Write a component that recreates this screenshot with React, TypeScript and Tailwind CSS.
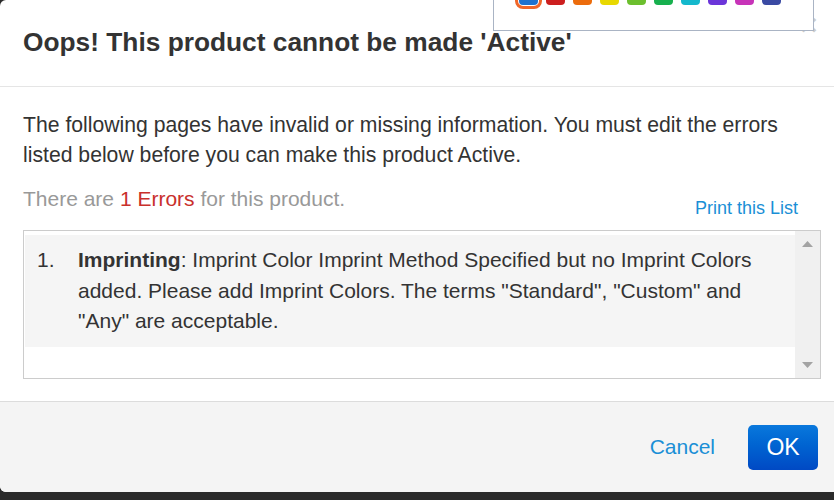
const SWATCHES = ['#cc1f1f', '#ec6c0c', '#e8d800', '#6cbf2e', '#17b04e', '#14b8cc', '#6b35d9', '#c733b8', '#3a4aa3'];

export default function App() {
  return (
    <div
      className="relative h-[500px] w-full overflow-hidden bg-[#2a2a2a] text-[#333]"
      style={{ fontFamily: '"Liberation Sans", Arial, sans-serif' }}
    >
      <div className="flex h-[492px] w-[844px] flex-col overflow-hidden rounded-md bg-white">
        {/* header */}
        <div className="relative h-[87px] shrink-0 border-b border-[#e5e5e5] px-[23px] pt-[26px]">
          <h1 className="text-[26.3px] font-bold leading-[32px]">Oops! This product cannot be made 'Active'</h1>
          <span className="absolute left-[800px] top-[10px] text-[30px] font-bold leading-none text-black opacity-20">×</span>
        </div>

        {/* body */}
        <div className="flex-1 px-[23px] pt-[23px]">
          <p className="text-[21.2px] leading-[30px]">
            The following pages have invalid or missing information. You must edit the errors listed below before you can make this product Active.
          </p>
          <div className="mt-[14px] flex items-start justify-between">
            <p className="text-[21px] leading-[30px] text-[#999]">
              There are <span className="text-[#c9302c]">1 Errors</span> for this product.
            </p>
            <a className="mr-[23px] mt-[13px] text-[18px] leading-[22px] text-[#1a8fd6]">Print this List</a>
          </div>
          <div className="mt-[11px] flex h-[149px] w-[798px] border border-[#ccc]">
            <div className="flex-1 pl-px pt-[4px]">
              <div className="flex bg-[#f5f5f5] pb-[10px] pl-[12px] pr-[30px] pt-[10px] text-[21px] leading-[30.5px]">
                <span className="w-[41px] shrink-0">1.</span>
                <p>
                  <b>Imprinting</b>: Imprint Color Imprint Method Specified but no Imprint Colors added. Please add Imprint Colors. The terms "Standard", "Custom" and "Any" are acceptable.
                </p>
              </div>
            </div>
            <div className="flex w-[25px] flex-col items-center justify-between bg-[#f0f0f0] py-[10px]">
              <svg width="11" height="6" viewBox="0 0 11 6"><path d="M0 6 L5.5 0 L11 6 Z" fill="#a3a3a3" /></svg>
              <svg width="11" height="6" viewBox="0 0 11 6"><path d="M0 0 L5.5 6 L11 0 Z" fill="#a3a3a3" /></svg>
            </div>
          </div>
        </div>

        {/* footer */}
        <div className="flex h-[91px] shrink-0 items-center justify-end gap-[33px] border-t border-[#dcdcdc] bg-[#f4f4f4] pr-[26px]">
          <a className="text-[21px] text-[#1a8fd6]">Cancel</a>
          <button className="h-[45px] w-[70px] rounded-[5px] bg-gradient-to-b from-[#0a78dc] to-[#0049c4] text-[23px] text-white">OK</button>
        </div>
      </div>

      {/* colour picker popover */}
      <div className="absolute left-[493px] top-[-31px] h-[62px] w-[321px] border border-[#aab4c4] bg-white pl-[25px] pt-[16px]">
        <div className="flex gap-[8px]">
          <div className="h-[19px] w-[19px] rounded-[4px] bg-[#1e72d0] outline-[3px] outline-offset-[1px] outline-[#f0672a]" />
          {SWATCHES.map((c) => (
            <div key={c} className="h-[19px] w-[19px] rounded-[4px]" style={{ backgroundColor: c }} />
          ))}
        </div>
      </div>
    </div>
  );
}
